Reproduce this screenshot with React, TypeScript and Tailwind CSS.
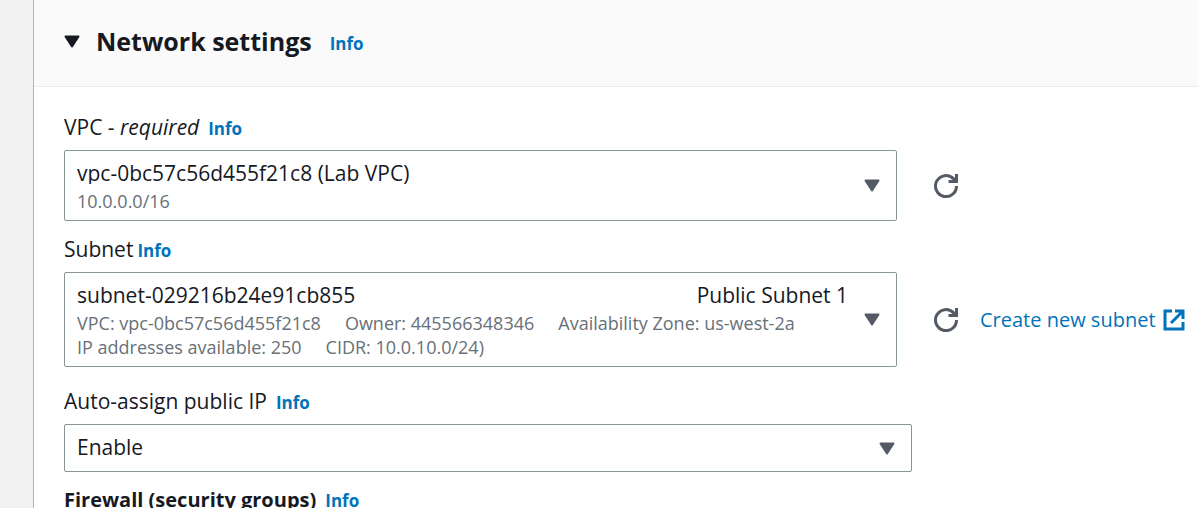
import type { ReactNode } from "react";

function Caret({ className }: { className: string }) {
  return (
    <svg viewBox="0 0 16 13" className={className} aria-hidden="true">
      <path d="M1.5 1.5h13L8 11.5z" fill="currentColor" stroke="currentColor" strokeWidth="2" strokeLinejoin="round" />
    </svg>
  );
}

function InfoLink({ topic }: { topic: string }) {
  return (
    <a href="#info" aria-label={`Info: ${topic}`} className="text-[17px] leading-5 font-bold text-[#0073bb]">
      Info
    </a>
  );
}

function RefreshButton({ label }: { label: string }) {
  return (
    <button type="button" aria-label={label} className="shrink-0 text-[#545b64]">
      <svg viewBox="0 0 24 24" className="size-6" fill="none" stroke="currentColor" strokeWidth="3" aria-hidden="true">
        <path d="M22.5 12a10.5 10.5 0 1 1-3.1-7.4l2.6 2.6" />
        <path d="M22.5 0v7.5h-8" />
      </svg>
    </button>
  );
}

type PickerProps = { id: string; value: string; className: string; children?: ReactNode };

function Picker({ id, value, className, children }: PickerProps) {
  return (
    <div className="grid min-w-0 items-center">
      <select
        id={id}
        className={`col-start-1 row-start-1 w-full appearance-none rounded-xs border border-[#879596] bg-white pr-12 pl-3 text-[21px] leading-6 text-[#16191f] ${className}`}
      >
        <option>{value}</option>
      </select>
      {children}
      <Caret className="pointer-events-none col-start-1 row-start-1 mr-[17px] h-[13px] w-4 justify-self-end text-[#545b64]" />
    </div>
  );
}

export default function App() {
  return (
    <div className="flex min-h-screen bg-[#f2f2f2] pl-[33px] font-['Open_Sans','Noto_Sans',sans-serif] text-[#16191f]">
      <section className="min-w-0 flex-1 border-l border-[#b4b6b6] bg-white">
        <header className="flex items-center gap-[18px] border-b border-[#eaeded] bg-[#fafafa] px-[30px] pt-6 pb-7">
          <h2 className="text-[25px] leading-[34px] font-bold">
            <button type="button" aria-expanded="true" className="flex items-center gap-4">
              <Caret className="h-[13px] w-4" />
              Network settings
            </button>
          </h2>
          <span className="flex pt-1.5">
            <InfoLink topic="Network settings" />
          </span>
        </header>

        <form className="pt-7 pr-3 pl-[30px]">
          <div className="mb-[11px] flex items-baseline gap-[9px] text-[21px] leading-6">
            <label htmlFor="vpc">
              VPC - <em>required</em>
            </label>
            <InfoLink topic="VPC" />
          </div>
          <div className="grid grid-cols-[minmax(0,1fr)_252px] items-center gap-[37px]">
            <Picker id="vpc" value="vpc-0bc57c56d455f21c8 (Lab VPC)" className="h-[71px] pt-2.5 pb-9">
              <p className="pointer-events-none col-start-1 row-start-1 mb-2 self-end pl-[13px] text-lg leading-6 text-[#687078]">
                10.0.0.0/16
              </p>
            </Picker>
            <RefreshButton label="Refresh VPCs" />
          </div>

          <div className="mt-4 mb-[11px] flex items-baseline gap-1 text-[21px] leading-6">
            <label htmlFor="subnet">Subnet</label>
            <InfoLink topic="Subnet" />
          </div>
          <div className="grid grid-cols-[minmax(0,1fr)_252px] items-center gap-[37px]">
            <Picker id="subnet" value="subnet-029216b24e91cb855" className="h-[95px] pt-2.5 pb-15">
              <div className="pointer-events-none col-start-1 row-start-1 flex flex-col self-stretch pt-[11px] pr-[49px] pl-[13px] text-lg leading-6 text-[#687078]">
                <p className="mb-1 self-end text-[21px] leading-6 text-[#16191f]">Public Subnet 1</p>
                <p className="flex gap-6">
                  <span>VPC: vpc-0bc57c56d455f21c8</span>
                  <span>Owner: 445566348346</span>
                  <span>Availability Zone: us-west-2a</span>
                </p>
                <p className="flex gap-6">
                  <span>IP addresses available: 250</span>
                  <span>CIDR: 10.0.10.0/24)</span>
                </p>
              </div>
            </Picker>
            <div className="flex items-center gap-[22px]">
              <RefreshButton label="Refresh subnets" />
              <a href="#create-subnet" className="flex items-center gap-[7px] text-xl leading-6 whitespace-nowrap text-[#0073bb]">
                Create new subnet
                <svg viewBox="0 0 22 22" className="size-[22px]" fill="none" stroke="currentColor" strokeWidth="3" aria-hidden="true">
                  <path d="M9 2H2v18h18v-7" />
                  <path d="M12 2h8v8M20 2 8 14" />
                </svg>
              </a>
            </div>
          </div>

          <div className="mt-[22px] mb-[11px] flex items-baseline gap-[9px] text-[21px] leading-6">
            <label htmlFor="public-ip">Auto-assign public IP</label>
            <InfoLink topic="Auto-assign public IP" />
          </div>
          <div className="pr-[274px]">
            <Picker id="public-ip" value="Enable" className="h-12 pb-0.5" />
          </div>

          <div className="mt-4 flex items-baseline gap-[9px] text-xl leading-6">
            <h3 className="font-bold">Firewall (security groups)</h3>
            <InfoLink topic="Firewall" />
          </div>
        </form>
      </section>
    </div>
  );
}
